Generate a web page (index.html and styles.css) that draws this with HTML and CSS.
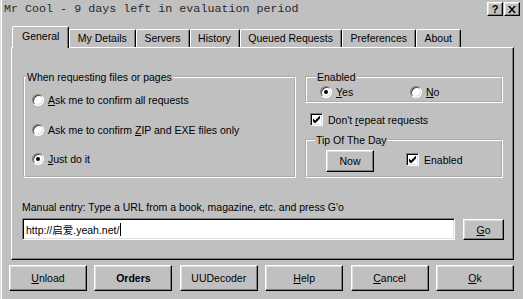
FILE: index.html
```html
<!DOCTYPE html>
<html lang="en">
<head>
  <meta charset="UTF-8">
  <title>Mr Cool</title>
  <link rel="stylesheet" href="styles.css">
</head>
<body>
  <div class="window">
    <div class="titlebar">
      <span class="title">Mr Cool - 9 days left in evaluation period</span>
      <div class="title-buttons">
        <span class="tbtn help">?</span>
        <span class="tbtn close">
          <svg width="8" height="7" viewBox="0 0 8 7"><path d="M0 0h2l2 2.5L6 0h2L5 3.5 8 7H6L4 4.5 2 7H0l3-3.5z" fill="#000"/></svg>
        </span>
      </div>
    </div>

    <div class="tabs">
      <div class="tab active">General</div>
      <div class="tab">My Details</div>
      <div class="tab">Servers</div>
      <div class="tab">History</div>
      <div class="tab">Queued Requests</div>
      <div class="tab">Preferences</div>
      <div class="tab">About</div>
    </div>

    <div class="panel">
      <div class="top-row">
        <fieldset class="group requests">
          <legend>When requesting files or pages</legend>
          <div class="options">
            <label class="option"><span class="radio"></span><span><u>A</u>sk me to confirm all requests</span></label>
            <label class="option"><span class="radio"></span><span>Ask me to confirm <u>Z</u>IP and EXE files only</span></label>
            <label class="option"><span class="radio checked"></span><span><u>J</u>ust do it</span></label>
          </div>
        </fieldset>

        <div class="side">
          <fieldset class="group enabled">
            <legend>Enabled</legend>
            <div class="yes-no">
              <label class="option"><span class="radio checked"></span><span><u>Y</u>es</span></label>
              <label class="option"><span class="radio"></span><span><u>N</u>o</span></label>
            </div>
          </fieldset>

          <label class="option repeat">
            <span class="check"><svg width="7" height="7" viewBox="0 0 7 7"><polygon points="0,2.5 2,4.5 7,-0.5 7,2.5 2,7.5 0,5.5" fill="#000"/></svg></span>
            <span>Don't <u>r</u>epeat requests</span>
          </label>

          <fieldset class="group tip">
            <legend>Tip Of The Day</legend>
            <div class="tip-row">
              <button class="btn now">Now</button>
              <label class="option">
                <span class="check"><svg width="7" height="7" viewBox="0 0 7 7"><polygon points="0,2.5 2,4.5 7,-0.5 7,2.5 2,7.5 0,5.5" fill="#000"/></svg></span>
                <span>Enabled</span>
              </label>
            </div>
          </fieldset>
        </div>
      </div>

      <div class="manual">
        <div class="manual-label">Manual entry: Type a URL from a book, magazine, etc. and press G'o</div>
        <div class="manual-row">
          <div class="url">http://启爱.yeah.net/<span class="caret"></span></div>
          <button class="btn go"><u>G</u>o</button>
        </div>
      </div>
    </div>

    <div class="actions">
      <button class="btn"><u>U</u>nload</button>
      <button class="btn default">Orders</button>
      <button class="btn">UUDecoder</button>
      <button class="btn"><u>H</u>elp</button>
      <button class="btn"><u>C</u>ancel</button>
      <button class="btn"><u>O</u>k</button>
    </div>
  </div>
</body>
</html>
```

FILE: styles.css
```css
* { margin: 0; padding: 0; box-sizing: border-box; }
body { width: 523px; height: 299px; overflow: hidden; background: #c0c0c0; color: #000; font-family: "Liberation Sans", Arial, "Noto Sans CJK SC", sans-serif; font-size: 10.5px; }
.window { height: 299px; display: flex; flex-direction: column; box-shadow: inset 1px 0 #dfdfdf, inset 2px 0 #fff; }

/* title bar */
.titlebar { height: 18px; display: flex; align-items: center; justify-content: space-between; padding: 0 3px 0 4px; }
.title { font-family: "Liberation Mono", "Courier New", monospace; font-size: 11.7px; color: #2a2a2a; }
.title-buttons { display: flex; gap: 1px; }
.tbtn { width: 16px; height: 14px; display: flex; align-items: center; justify-content: center; background: #c0c0c0; border: 1px solid; border-color: #fff #000 #000 #fff; box-shadow: inset -1px -1px #808080, inset 1px 1px #dfdfdf; font-weight: bold; font-size: 11px; line-height: 1; }

/* tabs */
.tabs { display: flex; align-items: flex-end; height: 21px; margin-top: 8px; padding-left: 12px; position: relative; z-index: 1; }
.tab { height: 18px; line-height: 16px; padding: 0 8px 0 7.5px; border: 1px solid; border-bottom: none; border-color: #fff #000 #000 #fff; box-shadow: inset -1px 0 #808080; border-radius: 2px 2px 0 0; background: #c0c0c0; white-space: nowrap; }
.tab.active { height: 22px; margin-bottom: -1px; padding: 0 9px; line-height: 18px; }

/* panel */
.panel { width: 503px; height: 213px; margin-left: 11px; border: 1px solid; border-color: #fff #000 #000 #fff; box-shadow: inset -1px -1px #808080; }
.top-row { display: flex; justify-content: space-between; padding: 23px 10px 0 11px; }

.group { border: 2px groove #fff; padding: 0 2px; }
.group legend { line-height: 12px; padding: 0 1px; }
.requests { width: 273px; padding-bottom: 9px; }
.requests legend { margin-left: -1px; }
.options { display: flex; flex-direction: column; gap: 13.5px; padding: 9px 0 0 5px; }

.option { display: flex; align-items: center; gap: 4px; height: 16px; white-space: nowrap; }
.radio { width: 12px; height: 12px; border-radius: 50%; background: #fff; border: 1px solid; border-color: #808080 #fff #fff #808080; box-shadow: inset 1px 1px #404040, inset -1px -1px #dfdfdf; display: flex; align-items: center; justify-content: center; flex-shrink: 0; }
.radio.checked::after { content: ""; width: 4px; height: 4px; border-radius: 50%; background: #000; }
.check { width: 13px; height: 13px; background: #fff; border: 1px solid; border-color: #808080 #fff #fff #808080; box-shadow: inset 1px 1px #000, inset -1px -1px #dfdfdf; display: flex; align-items: center; justify-content: center; flex-shrink: 0; }

.side { width: 198px; display: flex; flex-direction: column; }
.enabled { padding: 3px 2px 3px 13px; }
.enabled legend { margin-left: -4px; }
.tip legend { margin-left: -11px; }
.yes-no { display: grid; grid-template-columns: 90px auto; }
.yes-no .option { height: 12px; }
.repeat { margin: 10px 0 0 5px; height: 13px; gap: 5px; }
.tip { margin-top: 8px; padding: 4px 2px 4px 19px; }
.tip-row { display: flex; align-items: center; gap: 32px; }
.tip-row .option { gap: 5px; margin-top: -3px; }

/* buttons */
.btn { font: inherit; color: #000; background: #c0c0c0; border: 1px solid; border-color: #fff #000 #000 #fff; box-shadow: inset -1px -1px #808080, inset 1px 1px #dfdfdf; cursor: pointer; }
.now { width: 48px; height: 22px; }

/* manual entry */
.manual { padding: 23px 0 0 10px; }
.manual-label { line-height: 13px; }
.manual-row { display: flex; align-items: flex-start; gap: 8px; margin-top: 4px; }
.url { width: 433px; height: 22px; background: #fff; border: 1px solid; border-color: #808080 #fff #fff #808080; box-shadow: inset 1px 1px #000, inset -1px -1px #dfdfdf; padding: 0 3px; display: flex; align-items: center; }
.caret { width: 1px; height: 13px; margin-left: 1px; background: #000; }
.go { width: 41px; height: 21px; margin-top: 1px; }

/* bottom row */
.actions { display: flex; justify-content: space-between; padding: 0 9px; margin-top: 5px; }
.actions .btn { width: 78px; height: 26px; }
.actions .default { font-weight: bold; }
```
